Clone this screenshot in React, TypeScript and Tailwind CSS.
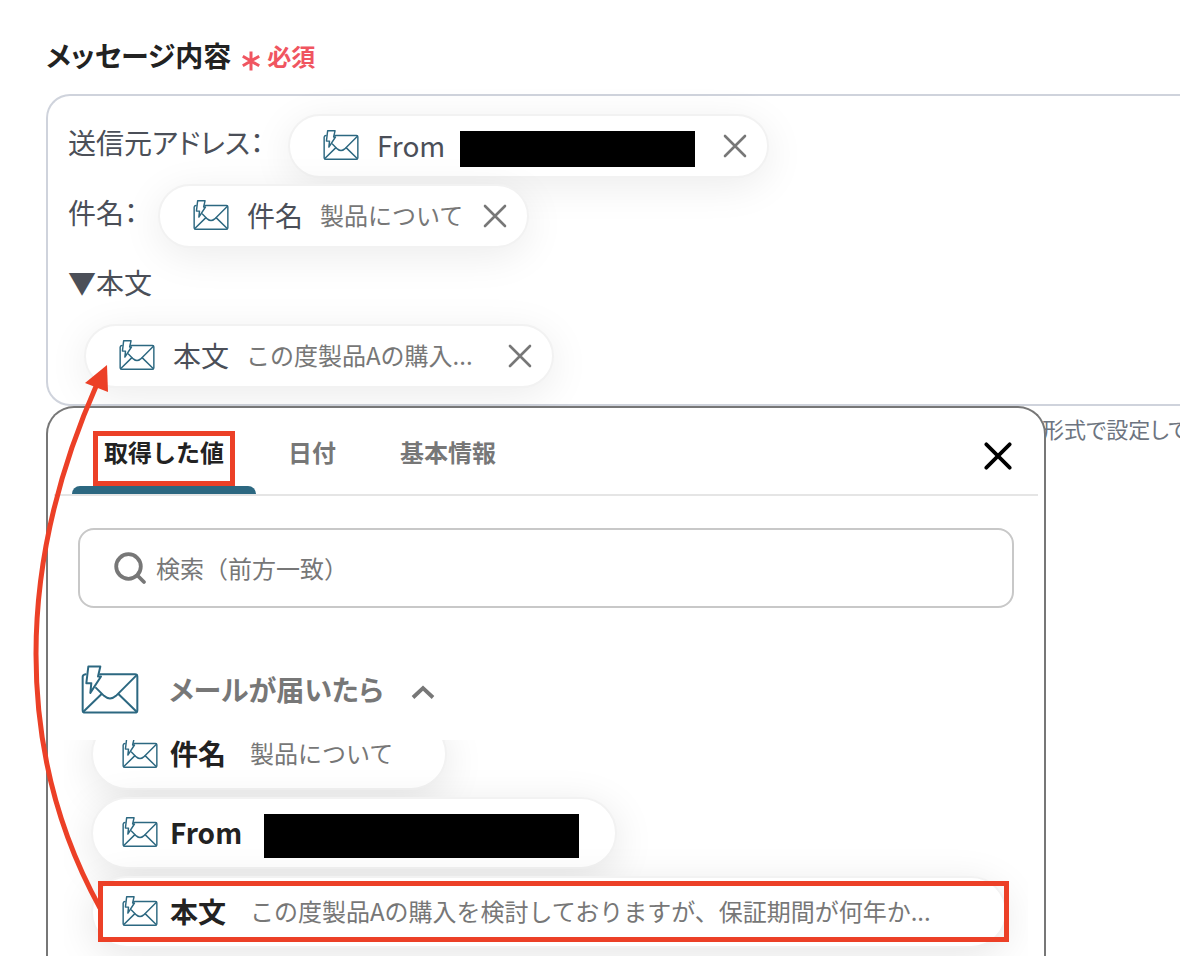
import type { ReactNode } from "react";

function MailTriggerIcon({ className, stroke }: { className: string; stroke: number }) {
  return (
    <svg
      viewBox="33 30 174 146"
      className={className}
      fill="none"
      stroke="#2c6881"
      strokeWidth={stroke}
      strokeLinejoin="round"
      strokeLinecap="round"
      aria-hidden="true"
    >
      <path d="M90 57H195Q202 57 202 64V165Q202 172 195 172H45Q38 172 38 165V65Q38 58 47 57" />
      <path d="M200 60L138 122Q120 138 102 122L78 98" />
      <path d="M40 170L94 117M200 170L146 117" />
      <path d="M55 34H91L84 64H93L61 113L64 84H49Z" />
    </svg>
  );
}

function CrossIcon({ className, stroke }: { className: string; stroke: number }) {
  return (
    <svg viewBox="0 0 24 24" className={className} fill="none" stroke="currentColor" strokeWidth={stroke} strokeLinecap="round" aria-hidden="true">
      <path d="M2 2L22 22M22 2L2 22" />
    </svg>
  );
}

function Redacted({ className }: { className: string }) {
  return <span className={`mt-2 block bg-black ${className}`} />;
}

function Chip({ name, className, children }: { name: string; className: string; children: ReactNode }) {
  return (
    <span
      className={`mt-[3px] flex h-16 shrink-0 items-center rounded-full border-2 border-[#f2f2f2] bg-white pr-[19px] pb-0.5 pl-[33px] shadow-[0_8px_40px_rgba(0,0,0,0.08)] ${className}`}
    >
      <MailTriggerIcon className="h-[30px] w-9 shrink-0" stroke={7} />
      <span className="ml-[18px] text-[28px]">{name}</span>
      {children}
      <button type="button" aria-label={`${name}を削除`} className="mt-0.5 ml-auto p-px text-[#777777]">
        <CrossIcon className="size-6" stroke={2.6} />
      </button>
    </span>
  );
}

function ValueRow({ name, className, marked, children }: { name: string; className: string; marked?: boolean; children: ReactNode }) {
  return (
    <li className="relative w-fit">
      <button
        type="button"
        className={`flex h-[72px] items-center rounded-full border-2 border-[#f2f2f2] bg-white pb-0.5 pl-[29px] shadow-[0_8px_40px_rgba(0,0,0,0.1)] ${className}`}
      >
        <MailTriggerIcon className="h-[30px] w-9 shrink-0" stroke={7} />
        <span className="ml-3 w-[70px] text-left text-[28px] font-bold text-[#222222]">{name}</span>
        {children}
      </button>
      {marked && <span className="absolute top-[5px] -right-0.5 bottom-1.5 left-[7px] border-5 border-[#ec4027]" />}
    </li>
  );
}

const tabs = ["取得した値", "日付", "基本情報"];

export default function App() {
  return (
    <div className="relative flex h-screen flex-col overflow-hidden bg-white pt-[34px] pl-[46px] font-['Noto_Sans_CJK_JP',sans-serif] text-[#4b4f58]">
      <h2 className="flex h-[60px] shrink-0 items-start text-[28px] leading-[42px] font-bold text-[#222222] [font-feature-settings:'palt']">
        メッセージ内容
        <span className="ml-2.5 flex items-center text-2xl leading-[44px] text-[#f05560]">
          <svg viewBox="0 0 20 20" className="mt-2.5 mr-1.5 size-5" stroke="currentColor" strokeWidth="3" aria-hidden="true">
            <path d="M10 0.5V19.5M1.8 5.2L18.2 14.8M18.2 5.2L1.8 14.8" />
          </svg>
          必須
        </span>
      </h2>

      <div className="shrink-0 rounded-l-3xl border-2 border-r-0 border-[#cfd3dc] pt-[15px] pb-[13px] pl-5 text-[28px] leading-[62px]">
        <div className="flex h-[70px] items-start">
          <span className="w-[220px] [font-feature-settings:'palt']">送信元アドレス：</span>
          <Chip name="From" className="w-[481px]">
            <Redacted className="ml-[15px] h-9 w-[235px]" />
          </Chip>
        </div>
        <div className="flex h-[70px] items-start">
          <span className="w-[90px] [font-feature-settings:'palt']">件名：</span>
          <Chip name="件名" className="w-[371px]">
            <span className="ml-[17px] text-2xl text-[#777777]">製品について</span>
          </Chip>
        </div>
        <div className="h-[70px]">▼本文</div>
        <div className="flex h-[70px] items-start pl-4">
          <Chip name="本文" className="w-[470px]">
            <span className="ml-[17px] text-2xl text-[#777777]">この度製品Aの購入...</span>
          </Chip>
        </div>
      </div>

      <div className="flex min-h-0 flex-1">
        <section className="relative flex w-full max-w-[1000px] shrink-0 flex-col rounded-t-[28px] border-2 border-b-0 border-[#777777] bg-white text-[#777777]">
          <div className="mx-1.5 flex h-[88px] shrink-0 items-stretch border-b-2 border-[#e5e5e5] pl-[18px]">
            {tabs.map((tab, i) => (
              <button
                key={tab}
                type="button"
                className={
                  i === 0
                    ? "relative flex flex-col items-center px-8 pt-7 text-2xl font-bold text-[#222222]"
                    : "flex flex-col items-center px-8 pt-7 text-2xl font-bold"
                }
              >
                {tab}
                {i === 0 && (
                  <>
                    <span className="absolute inset-x-0 bottom-0 h-2 rounded-t-lg bg-[#2c6881]" />
                    <span className="absolute inset-x-[21px] top-[23px] h-[55px] border-5 border-[#ec4027]" />
                  </>
                )}
              </button>
            ))}
            <button type="button" aria-label="閉じる" className="mt-2.5 mr-[26px] ml-auto text-black">
              <CrossIcon className="size-7" stroke={3.2} />
            </button>
          </div>

          <label className="mx-[30px] mt-8 flex h-20 shrink-0 items-center rounded-2xl border-2 border-[#c8c8c8] pl-8">
            <svg viewBox="0 0 36 36" className="size-9" fill="none" stroke="currentColor" strokeWidth="3.8" aria-hidden="true">
              <path d="M25.5 25.5L32 32" strokeLinecap="round" />
              <circle cx="16.5" cy="16.5" r="12.3" />
            </svg>
            <input
              type="text"
              aria-label="検索"
              placeholder="検索（前方一致）"
              className="ml-2 min-w-0 flex-1 bg-transparent text-2xl outline-none placeholder:text-[#777777]"
            />
          </label>

          <button type="button" className="mt-14 mb-[26px] flex h-[50px] shrink-0 items-center pl-[33px] text-[28px] font-bold">
            <MailTriggerIcon className="h-[49px] w-[58px]" stroke={6} />
            <span className="ml-[30px] [font-feature-settings:'palt']">メールが届いたら</span>
            <svg viewBox="0 0 24 14" className="mt-1.5 ml-7 h-3.5 w-6" fill="none" stroke="currentColor" strokeWidth="3.8" aria-hidden="true">
              <path d="M2 12.5L12 3L22 12.5" />
            </svg>
          </button>

          <div className="mx-4 flex min-h-0 flex-1 flex-col justify-end overflow-hidden pl-[27px]">
            <ul className="-mb-[72px] flex flex-col gap-[7px] pb-20">
              <ValueRow name="件名" className="w-[356px]">
                <span className="ml-2.5 text-2xl">製品について</span>
              </ValueRow>
              <ValueRow name="From" className="w-[526px]">
                <Redacted className="ml-6 h-11 w-[315px]" />
              </ValueRow>
              <ValueRow name="本文" className="w-[916px]" marked>
                <span className="ml-2.5 text-2xl">この度製品Aの購入を検討しておりますが、保証期間が何年か...</span>
              </ValueRow>
            </ul>
          </div>
        </section>
        <p className="-ml-1 pt-1.5 text-[22px] leading-8 whitespace-nowrap text-[#6d7480] [font-feature-settings:'palt']">形式で設定して</p>
      </div>

      <svg viewBox="0 0 120 560" className="pointer-events-none absolute top-[360px] left-0 h-[560px] w-[120px]" aria-hidden="true">
        <path d="M100 548C56 468 36 384 36 294C36 200 58 112 97 24" fill="none" stroke="#ec4027" strokeWidth="5" />
        <path d="M107 5L85 23L108 32Z" fill="#ec4027" />
      </svg>
    </div>
  );
}
